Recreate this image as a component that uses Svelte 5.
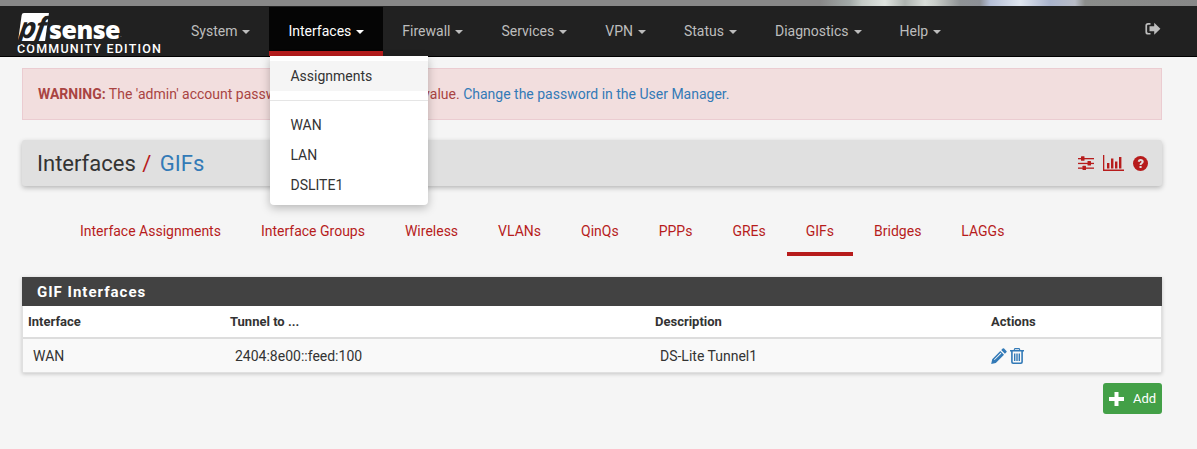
<script>
  const menu = ['System', 'Interfaces', 'Firewall', 'Services', 'VPN', 'Status', 'Diagnostics', 'Help'];
  const tabs = ['Interface Assignments', 'Interface Groups', 'Wireless', 'VLANs', 'QinQs', 'PPPs', 'GREs', 'GIFs', 'Bridges', 'LAGGs'];
</script>

<div class="strip"></div>
<header class="navbar">
  <div class="logo">
    <div class="mark">
      <span class="pf"><i>pf</i></span><span class="sense">sense</span><span class="reg">.</span>
    </div>
    <div class="edition">COMMUNITY EDITION</div>
  </div>
  <nav class="menu">
    {#each menu as item}
      <div class="item" class:active={item === 'Interfaces'}>
        <span>{item}</span><b class="caret"></b>
        {#if item === 'Interfaces'}
          <div class="dropdown">
            <div class="dd-row hover">Assignments</div>
            <div class="divider"></div>
            <div class="dd-row">WAN</div>
            <div class="dd-row">LAN</div>
            <div class="dd-row">DSLITE1</div>
          </div>
        {/if}
      </div>
    {/each}
  </nav>
  <svg class="logout" width="16" height="14" viewBox="0 0 16 14" aria-hidden="true">
    <path fill="currentColor" d="M5.5 1H3a2.6 2.6 0 0 0-2.6 2.6v6.400A2.600 2.600 0 0 0 3 12.600h2.500v-1.700H3.200A1.100 1.100 0 0 1 2.100 9.800V3.800A1.100 1.100 0 0 1 3.200 2.700h2.300z"/>
    <path fill="currentColor" d="M9.200.8 15.400 6.800 9.200 12.800V9.300H4.500V4.300H9.200z"/>
  </svg>
</header>

<main class="page">
  <div class="alert"><strong>WARNING:</strong> The 'admin' account password is set to the default value. <a href="#a">Change the password in the User Manager.</a></div>

  <div class="crumbs">
    <h1>Interfaces <em>/</em> <a href="#b">GIFs</a></h1>
    <div class="tools">
      <svg width="16" height="14" viewBox="0 0 16 14" aria-hidden="true">
        <g fill="currentColor">
          <rect x="0" y="2" width="16" height="1.300"/><rect x="3" y="0.300" width="3.500" height="4.500" rx=".5"/>
          <rect x="0" y="6.800" width="16" height="1.300"/><rect x="9.500" y="5.100" width="3.500" height="4.500" rx=".5"/>
          <rect x="0" y="11.500" width="16" height="1.300"/><rect x="4.500" y="9.800" width="3.500" height="4.200" rx=".5"/>
        </g>
      </svg>
      <svg width="21" height="16" viewBox="0 0 21 16" aria-hidden="true">
        <g fill="currentColor">
          <rect x="0" y="0" width="1.300" height="16"/><rect x="0" y="14.500" width="21" height="1.500"/>
          <rect x="4" y="8" width="2.400" height="5.500"/><rect x="8" y="3.500" width="2.400" height="10"/>
          <rect x="12" y="6.500" width="2.400" height="7"/><rect x="16" y="2" width="2.400" height="11.500"/>
        </g>
      </svg>
      <svg width="15" height="15" viewBox="0 0 15 15" aria-hidden="true">
        <circle cx="7.500" cy="7.500" r="7.500" fill="currentColor"/>
        <path d="M4.700 5.600C5 3.900 6.200 3.100 7.700 3.100c1.700 0 3 1 3 2.500 0 1.300-.8 1.800-1.500 2.300-.5.300-.7.500-.7 1.100H6.600c0-1.300.4-1.800 1.200-2.300.5-.3.8-.6.800-1 0-.5-.4-.8-.9-.8-.6 0-.9.300-1.100 1z" fill="#e0e0e0"/>
        <rect x="6.500" y="10" width="2.100" height="2" fill="#e0e0e0"/>
      </svg>
    </div>
  </div>

  <ul class="tabs">
    {#each tabs as t}
      <li class:current={t === 'GIFs'}><a href="#t">{t}</a></li>
    {/each}
  </ul>

  <section class="panel">
    <h2>GIF Interfaces</h2>
    <table>
      <thead>
        <tr><th class="c1">Interface</th><th class="c2">Tunnel to ...</th><th class="c3">Description</th><th>Actions</th></tr>
      </thead>
      <tbody>
        <tr>
          <td>WAN</td>
          <td>2404:8e00::feed:100</td>
          <td>DS-Lite Tunnel1</td>
          <td class="acts">
            <svg width="16" height="16" viewBox="0 0 16 16" aria-hidden="true">
              <path fill="currentColor" d="M11.700 .6a1 1 0 0 1 1.400 0l2.300 2.300a1 1 0 0 1 0 1.400L13.900 5.800 10.200 2.100zM9.300 3 13 6.700 4.800 14.900.2 15.900 1.200 11.200z"/>
              <path fill="#f9f9f9" d="M3 11.500 9.700 4.800 10.300 5.400 3.600 12.100z"/>
            </svg>
            <svg width="14" height="16" viewBox="0 0 14 16" aria-hidden="true">
              <path fill="currentColor" fill-rule="evenodd" d="M4.500 0h5l.9 2.100H14v1.500h-1.100V14a2 2 0 0 1-2 2H3.100a2 2 0 0 1-2-2V3.600H0V2.100h3.600zM5.100 1.200 4.800 2.100h4.400L8.900 1.200zM2.700 3.600V13.700c0 .5.300.8.700.8h7.200c.4 0 .7-.3.700-.8V3.600zM4 5.500h1.400v7.500H4zM6.300 5.500h1.400v7.500H6.300zM8.600 5.500H10v7.500H8.600z"/>
            </svg>
          </td>
        </tr>
      </tbody>
    </table>
  </section>

  <div class="actions">
    <a class="add" href="#c">
      <svg width="15" height="14" viewBox="0 0 15 14" aria-hidden="true"><path fill="#fff" d="M5.500 0h4v5h5.500v4H9.500v5h-4V9H0V5h5.500z"/></svg>
      <span>Add</span>
    </a>
  </div>
</main>

<style>
  :global(body) {
    margin: 0;
    background: #f5f5f5;
    font-family: Roboto, "Liberation Sans", sans-serif;
    font-size: 14px;
    color: #333;
  }
  .strip {
    height: 6px;
    background:
      linear-gradient(90deg, #888 0, #888 820px, #a3aaa8 850px, #c4cac6 862px, #dfe3df 885px, #aeb4b0 905px, #d8dcd8 925px, #c9cdc9 935px, #8f9395 960px, #8d9096 980px, #b5bfd6 990px, #dfe5ef 1020px, #aab4cc 1050px, #b8bcc6 1075px, #8b8d8b 1085px, #888 1197px);
  }
  .navbar {
    display: flex;
    align-items: stretch;
    height: 50px;
    background: #212121;
    border-bottom: 1px solid #000;
    position: relative;
  }
  .logo {
    width: 172px;
    flex: none;
    padding: 7px 0 0 17px;
    box-sizing: border-box;
    color: #fff;
  }
  .mark {
    display: flex;
    align-items: flex-end;
    height: 28px;
    padding-left: 3px;
  }
  .pf {
    display: block;
    width: 27px;
    height: 28px;
    background: #fff;
    border-radius: 2px 0 0 0;
    transform: skewX(-8deg);
    color: #212121;
    font: italic 700 29px/27px "Open Sans", sans-serif;
    letter-spacing: -1px;
    text-align: center;
  }
  .pf i { display: block; transform: translateX(-1px); }
  .sense {
    font: 800 25px/24px "Open Sans", sans-serif;
    letter-spacing: -.5px;
    margin-left: 2px;
    height: 24px;
  }
  .reg { font-size: 7px; color: #999; line-height: 12px; }
  .edition {
    font: 500 12.500px/12px Roboto, sans-serif;
    letter-spacing: 1.200px;
    margin-top: 2px;
    white-space: nowrap;
  }
  .menu { display: flex; flex: 1; }
  .item {
    position: relative;
    padding: 1px 19px 0;
    height: 49px;
    line-height: 48px;
    color: #bdbdbd;
    box-sizing: border-box;
    white-space: nowrap;
  }
  .item.active {
    background: #050505;
    color: #fff;
    margin-top: 1px;
    padding-top: 0;
    border-bottom: 5px solid #b71c1c;
  }
  .caret {
    display: inline-block;
    width: 0;
    height: 0;
    margin-left: 5px;
    vertical-align: middle;
    border-top: 4px solid currentColor;
    border-left: 4px solid transparent;
    border-right: 4px solid transparent;
  }
  .dropdown {
    position: absolute;
    top: 49px;
    left: 1px;
    width: 158px;
    box-sizing: border-box;
    padding: 5px 0;
    background: #fff;
    border-radius: 0 0 4px 4px;
    box-shadow: 0 3px 10px rgba(0, 0, 0, .25);
    color: #333;
    z-index: 5;
    line-height: 30px;
  }
  .dd-row { padding: 0 20px; }
  .dd-row.hover { background: #f5f5f5; }
  .divider { height: 1px; background: #e5e5e5; margin: 9px 0 9px; }
  .logout {
    color: #bdbdbd;
    margin: 16px 36px 0 0;
  }
  .page {
    margin: 11px 35px 0 22px;
  }
  .alert {
    box-sizing: border-box;
    height: 52px;
    padding: 0 15px;
    line-height: 51px;
    background: #f2dede;
    border: 1px solid #ebccd1;
    color: #a94442;
    white-space: nowrap;
  }
  .alert strong { font-weight: 700; }
  .alert a { color: #337ab7; text-decoration: none; }
  .crumbs {
    display: flex;
    align-items: center;
    justify-content: space-between;
    height: 46px;
    margin-top: 20px;
    padding: 0 15px;
    background: #e0e0e0;
    border-radius: 3px;
    box-shadow: 0 2px 5px rgba(0, 0, 0, .25);
  }
  h1 {
    margin: 0;
    font-size: 22px;
    font-weight: 400;
    color: #333;
    word-spacing: 1px;
  }
  h1 em { font-style: normal; color: #b71c1c; }
  h1 a { color: #337ab7; text-decoration: none; margin-left: 2px; }
  .tools {
    display: flex;
    align-items: center;
    gap: 9px;
    color: #b71c1c;
    margin-right: -1px;
  }
  .tabs {
    display: flex;
    list-style: none;
    margin: 22px 0 0;
    padding: 0 0 0 -1px;
    height: 48px;
  }
  .tabs li { margin-right: 2px; }
  .tabs li:first-child { margin-left: -1px; }
  .tabs a {
    display: block;
    box-sizing: border-box;
    height: 48px;
    padding: 0 19px;
    line-height: 46px;
    color: #b71c1c;
    text-decoration: none;
  }
  .tabs .current a { border-bottom: 4px solid #b71c1c; }
  .panel {
    margin-top: 21px;
    background: #fff;
    box-shadow: 0 1px 4px rgba(0, 0, 0, .2);
    border: 1px solid #e0e0e0;
    border-top: 0;
  }
  h2 {
    margin: 0 -1px;
    height: 29px;
    padding: 0 15px;
    background: #424242;
    color: #fff;
    font-size: 15px;
    font-weight: 700;
    line-height: 30px;
    letter-spacing: 1px;
  }
  table {
    width: 100%;
    table-layout: fixed;
    border-collapse: collapse;
  }
  th {
    height: 31px;
    padding: 0 0 0 5px;
    text-align: left;
    font-weight: 700;
    font-size: 13px;
    color: #333;
    border-bottom: 2px solid #ddd;
  }
  .c1 { width: 197px; }
  .c2 { width: 420px; }
  .c3 { width: 331px; }
  td {
    height: 33px;
    padding: 0 0 0 10px;
    background: #f9f9f9;
    color: #333;
  }
  .acts { color: #337ab7; padding-left: 5px; white-space: nowrap; font-size: 0; }
  .acts svg + svg { margin-left: 3px; }
  .actions {
    display: flex;
    justify-content: flex-end;
    margin-top: 10px;
  }
  .add {
    display: flex;
    align-items: center;
    gap: 9px;
    box-sizing: border-box;
    width: 59px;
    height: 31px;
    padding-left: 6px;
    background: #43a047;
    border-radius: 3px;
    color: #fff;
    font-size: 13px;
    text-decoration: none;
  }
</style>
